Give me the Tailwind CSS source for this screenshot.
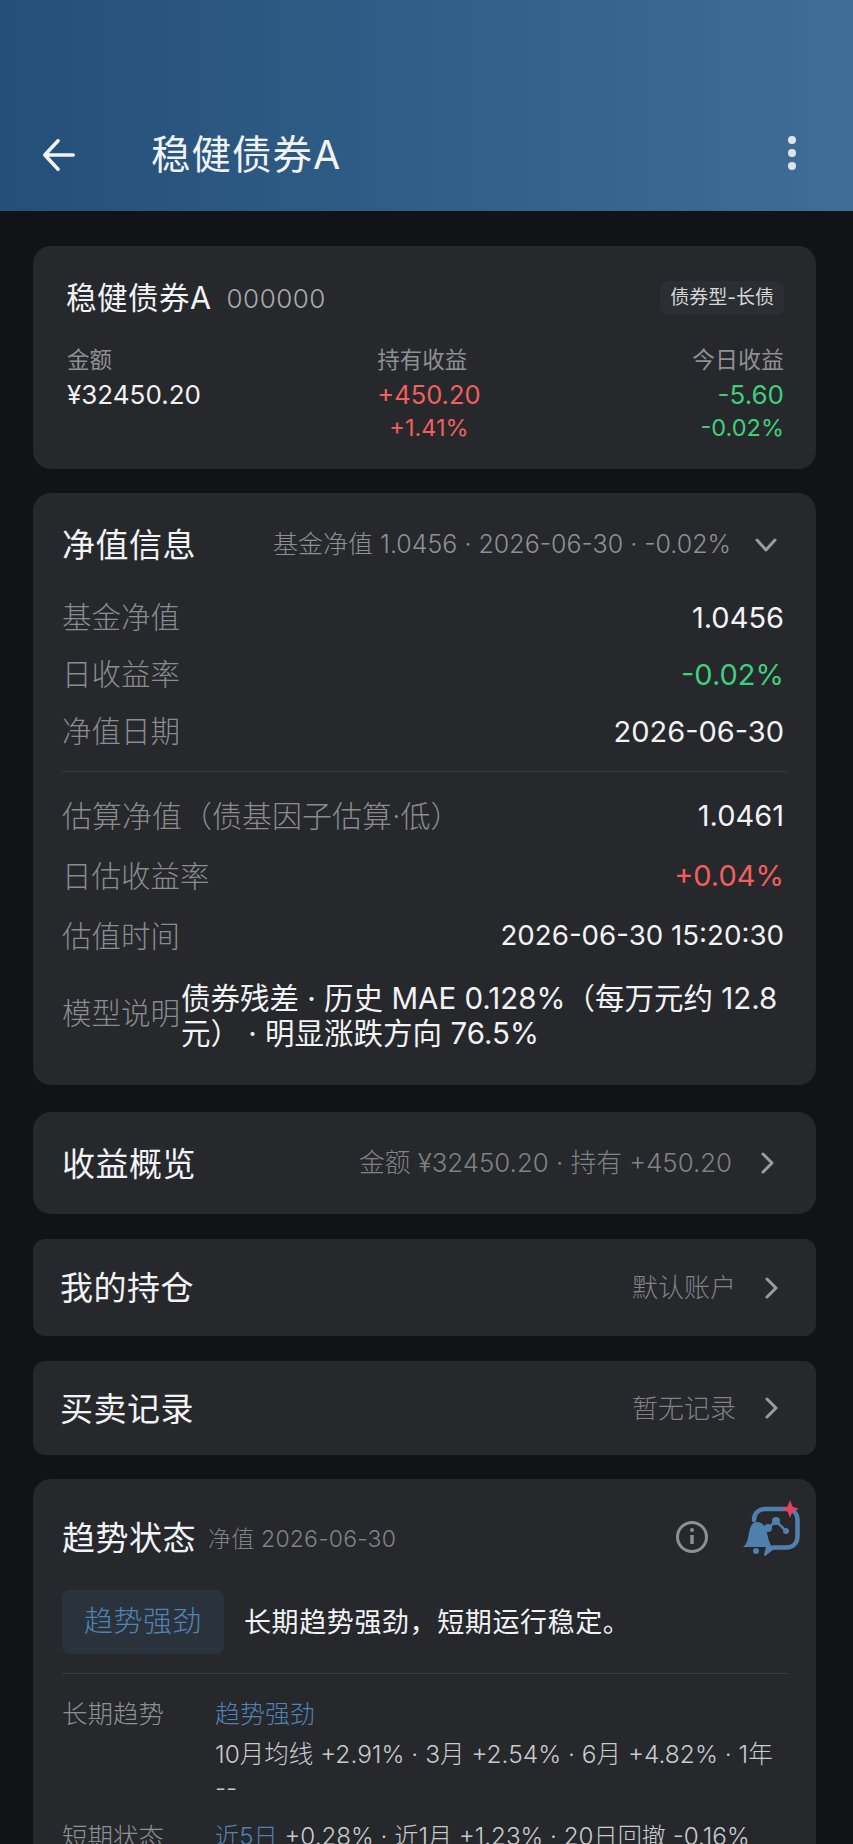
<!DOCTYPE html>
<html lang="zh-CN">
<head>
    <meta charset="UTF-8">
    <title>稳健债券A</title>
    <meta name="viewport" content="width=device-width, initial-scale=1.0">
    <script src="https://cdn.jsdelivr.net/npm/@tailwindcss/browser@4"></script>
</head>
<body class="bg-[#111316] font-['Inter','Noto_Sans_CJK_SC',sans-serif] text-[#f2f3f5] h-[1844px] overflow-hidden">
    <!-- 顶部栏 -->
    <header class="h-[211px] bg-gradient-to-r from-[#234f78] to-[#3f6d98] flex items-end pb-[39px] pl-[42px] pr-[57px]">
        <svg class="w-[34px] h-[34px]" viewBox="0 0 36 36" fill="none" stroke="#f1f4f7" stroke-width="3.8" stroke-linecap="round" stroke-linejoin="round"><path d="M33 18H3M17 3 3 18l14 15"/></svg>
        <h1 class="ml-[75px] mb-[-5px] text-[39.500px] leading-[44px] tracking-[1px]">稳健债券A</h1>
        <div class="ml-auto flex flex-col gap-[5px] pb-[2px]">
            <span class="w-[8px] h-[8px] rounded-full bg-[#dfe4ea]"></span>
            <span class="w-[8px] h-[8px] rounded-full bg-[#dfe4ea]"></span>
            <span class="w-[8px] h-[8px] rounded-full bg-[#dfe4ea]"></span>
        </div>
    </header>

    <main class="pl-[33px] pr-[37px] pt-[35px] flex flex-col">
        <!-- 基金概要 -->
        <section class="h-[223px] bg-[#26282c] rounded-[18px] pt-[35px] pl-[33px] pr-[32px]">
            <div class="flex items-center h-[34px]">
                <span class="text-[30.500px] tracking-[0.500px]">稳健债券A</span>
                <span class="ml-[15px] text-[26px] text-[#a9abae] font-light tracking-[0.500px]">000000</span>
                <span class="ml-auto h-[34px] px-[10px] rounded-[8px] bg-[#2b2e32] text-[19px] leading-[34px] text-[#d5d7d9]">债券型-长债</span>
            </div>
            <div class="flex justify-between mt-[27px]">
                <div class="flex flex-col items-start pl-[1px]">
                    <span class="text-[22.500px] leading-[36px] text-[#8e9093]">金额</span>
                    <span class="text-[26px] leading-[34px]">¥32450.20</span>
                </div>
                <div class="flex flex-col items-center mr-[35px]">
                    <span class="self-start text-[22.500px] leading-[36px] text-[#8e9093]">持有收益</span>
                    <span class="text-[25.500px] leading-[34px] text-[#f25f5c]">+450.20</span>
                    <span class="text-[23.500px] leading-[32px] text-[#f25f5c]">+1.41%</span>
                </div>
                <div class="flex flex-col items-end">
                    <span class="text-[23px] leading-[36px] text-[#8e9093]">今日收益</span>
                    <span class="text-[26px] leading-[34px] text-[#3ecf7d]">-5.60</span>
                    <span class="text-[23.500px] leading-[32px] text-[#3ecf7d]">-0.02%</span>
                </div>
            </div>
        </section>

        <!-- 净值信息 -->
        <section class="mt-[24px] h-[592px] bg-[#26282c] rounded-[18px] pt-[30px] pl-[29px] pr-[32px]">
            <div class="flex items-center h-[44px]">
                <h2 class="text-[33px] leading-[44px] tracking-[0.500px]">净值信息</h2>
                <span class="ml-auto text-[25px] text-[#8e9093] font-light">基金净值 1.0456 · 2026-06-30 · -0.02%</span>
                <svg class="ml-[24px] mr-[7px] w-[22px] h-[22px]" viewBox="0 0 22 22" fill="none" stroke="#9a9c9f" stroke-width="3" stroke-linecap="round" stroke-linejoin="round"><path d="m2 6 9 10 9-10"/></svg>
            </div>
            <div class="mt-[22px] flex flex-col">
                <div class="flex justify-between items-center h-[57px]"><span class="text-[29.500px] text-[#8a8c8f] font-light">基金净值</span><span class="text-[29px]">1.0456</span></div>
                <div class="flex justify-between items-center h-[57px]"><span class="text-[29.500px] text-[#8a8c8f] font-light">日收益率</span><span class="text-[29px] text-[#3ecf7d]">-0.02%</span></div>
                <div class="flex justify-between items-center h-[57px]"><span class="text-[29.500px] text-[#8a8c8f] font-light">净值日期</span><span class="text-[29px]">2026-06-30</span></div>
            </div>
            <div class="mt-[11px] h-px bg-[#37393d] mr-[-3px]"></div>
            <div class="mt-[14px] flex flex-col">
                <div class="flex justify-between items-center h-[60px]"><span class="text-[30px] text-[#8a8c8f] font-light">估算净值（债基因子估算·低）</span><span class="text-[29px]">1.0461</span></div>
                <div class="flex justify-between items-center h-[60px]"><span class="text-[29.500px] text-[#8a8c8f] font-light">日估收益率</span><span class="text-[29px] text-[#f25f5c]">+0.04%</span></div>
                <div class="flex justify-between items-center h-[60px]"><span class="text-[29.500px] text-[#8a8c8f] font-light">估值时间</span><span class="text-[27.700px]">2026-06-30 15:20:30</span></div>
            </div>
            <div class="mt-[15px] flex items-center">
                <span class="text-[29.500px] text-[#8a8c8f] font-light shrink-0 mb-[6px]">模型说明</span>
                <p class="text-[29.500px] leading-[35px] ml-[1px]">债券残差 · 历史 MAE 0.128%（每万元约 12.8 元） · 明显涨跌方向 76.5%</p>
            </div>
        </section>

        <!-- 收益概览 -->
        <section class="mt-[27px] h-[102px] bg-[#26282c] rounded-[18px] pl-[29px] pr-[40px] flex items-center">
            <h2 class="text-[33px] tracking-[0.500px] mt-[3px]">收益概览</h2>
            <span class="ml-auto text-[25.800px] text-[#808285] font-light">金额 ¥32450.20 · 持有 +450.20</span>
            <svg class="ml-[26px] w-[18px] h-[22px]" viewBox="0 0 18 22" fill="none" stroke="#9a9c9f" stroke-width="3" stroke-linecap="round" stroke-linejoin="round"><path d="m5 2 9 9-9 9"/></svg>
        </section>

        <!-- 我的持仓 -->
        <section class="mt-[25px] h-[97px] bg-[#26282c] rounded-[12px] pl-[27px] pr-[36px] flex items-center">
            <h2 class="text-[33px] tracking-[0.500px] mt-[3px]">我的持仓</h2>
            <span class="ml-auto text-[26px] text-[#808285] font-light">默认账户</span>
            <svg class="ml-[26px] w-[18px] h-[22px]" viewBox="0 0 18 22" fill="none" stroke="#9a9c9f" stroke-width="3" stroke-linecap="round" stroke-linejoin="round"><path d="m5 2 9 9-9 9"/></svg>
        </section>

        <!-- 买卖记录 -->
        <section class="mt-[25px] h-[94px] bg-[#26282c] rounded-[12px] pl-[27px] pr-[36px] flex items-center">
            <h2 class="text-[33px] tracking-[0.500px] mt-[3px]">买卖记录</h2>
            <span class="ml-auto text-[26px] text-[#808285] font-light">暂无记录</span>
            <svg class="ml-[26px] w-[18px] h-[22px]" viewBox="0 0 18 22" fill="none" stroke="#9a9c9f" stroke-width="3" stroke-linecap="round" stroke-linejoin="round"><path d="m5 2 9 9-9 9"/></svg>
        </section>

        <!-- 趋势状态 -->
        <section class="mt-[24px] h-[420px] bg-[#26282c] rounded-t-[18px] pt-[38px] pl-[29px] pr-[28px] relative">
            <div class="flex items-center h-[44px]">
                <h2 class="text-[33px] tracking-[0.500px]">趋势状态</h2>
                <span class="ml-[12px] text-[23px] text-[#808285] font-light tracking-[0.200px]">净值 2026-06-30</span>
                <svg class="ml-auto mr-[79px] mb-[4px] w-[34px] h-[34px]" viewBox="0 0 34 34" fill="none" stroke="#8e9093" stroke-width="3"><circle cx="17" cy="17" r="14.500"/><path d="M17 15v9" stroke-width="3.400"/><circle cx="17" cy="10" r="2" fill="#8e9093" stroke="none"/></svg>
            </div>
            <svg class="absolute right-[16px] top-[21px] w-[60px] h-[58px]" viewBox="0 -3 60 58" fill="none">
                <path d="M14 17C14 10 19 6 25 6H46C53 6 57.500 10 57.500 17V33C57.500 40 53 44.500 46 44.500H33" stroke="#4f80ad" stroke-width="4.500" stroke-linecap="round"/>
                <path d="M27 44 35 44 25 52z" fill="#4f80ad" stroke="#4f80ad" stroke-width="2" stroke-linejoin="round"/>
                <path d="M17 19c6 0 9 5 10 11 1 5 2 9 5 14H3c4-3 5-8 6-14 1-6 3-11 8-11z" fill="#4f80ad"/>
                <circle cx="16" cy="48" r="3" fill="#4f80ad"/>
                <circle cx="36" cy="18" r="4" fill="#4f80ad"/>
                <circle cx="46" cy="28" r="3" fill="#4f80ad"/>
                <circle cx="28" cy="25" r="4" fill="#4f80ad"/>
                <path d="M28 25 36 18 46 28" stroke="#4f80ad" stroke-width="2.500"/>
                <path d="M50-3 52.500 3.500 59 6 52.500 8.500 50 15 47.500 8.500 41 6 47.500 3.500z" fill="#e0435f"/>
            </svg>
            <div class="mt-[29px] flex items-center">
                <span class="h-[64px] w-[162px] rounded-[8px] bg-[#2a333b] text-center text-[29px] leading-[64px] tracking-[0.500px] text-[#4f83b5] font-light">趋势强劲</span>
                <p class="ml-[20px] mt-[3px] text-[27px] tracking-[0.600px]">长期趋势强劲，短期运行稳定。</p>
            </div>
            <div class="mt-[19px] h-px bg-[#3a3c40]"></div>
            <div class="mt-[22px] flex">
                <span class="w-[153px] shrink-0 text-[25.500px] leading-[36px] text-[#8e9093] font-light">长期趋势</span>
                <div>
                    <p class="text-[25px] leading-[36px] text-[#4f83b5] font-light">趋势强劲</p>
                    <p class="mt-[5px] text-[24.500px] leading-[34px] text-[#c9cbce] font-light">10月均线 +2.91% · 3月 +2.54% · 6月 +4.82% · 1年 <span class="whitespace-nowrap">--</span></p>
                </div>
            </div>
            <div class="mt-[14px] flex">
                <span class="w-[153px] shrink-0 text-[25.500px] leading-[36px] text-[#8e9093] font-light">短期状态</span>
                <p class="text-[24.200px] leading-[36px] text-[#c9cbce] font-light"><span class="text-[#4f83b5]">近5日</span> +0.28% · 近1月 +1.23% · 20日回撤 -0.16%</p>
            </div>
        </section>
    </main>
</body>
</html>
